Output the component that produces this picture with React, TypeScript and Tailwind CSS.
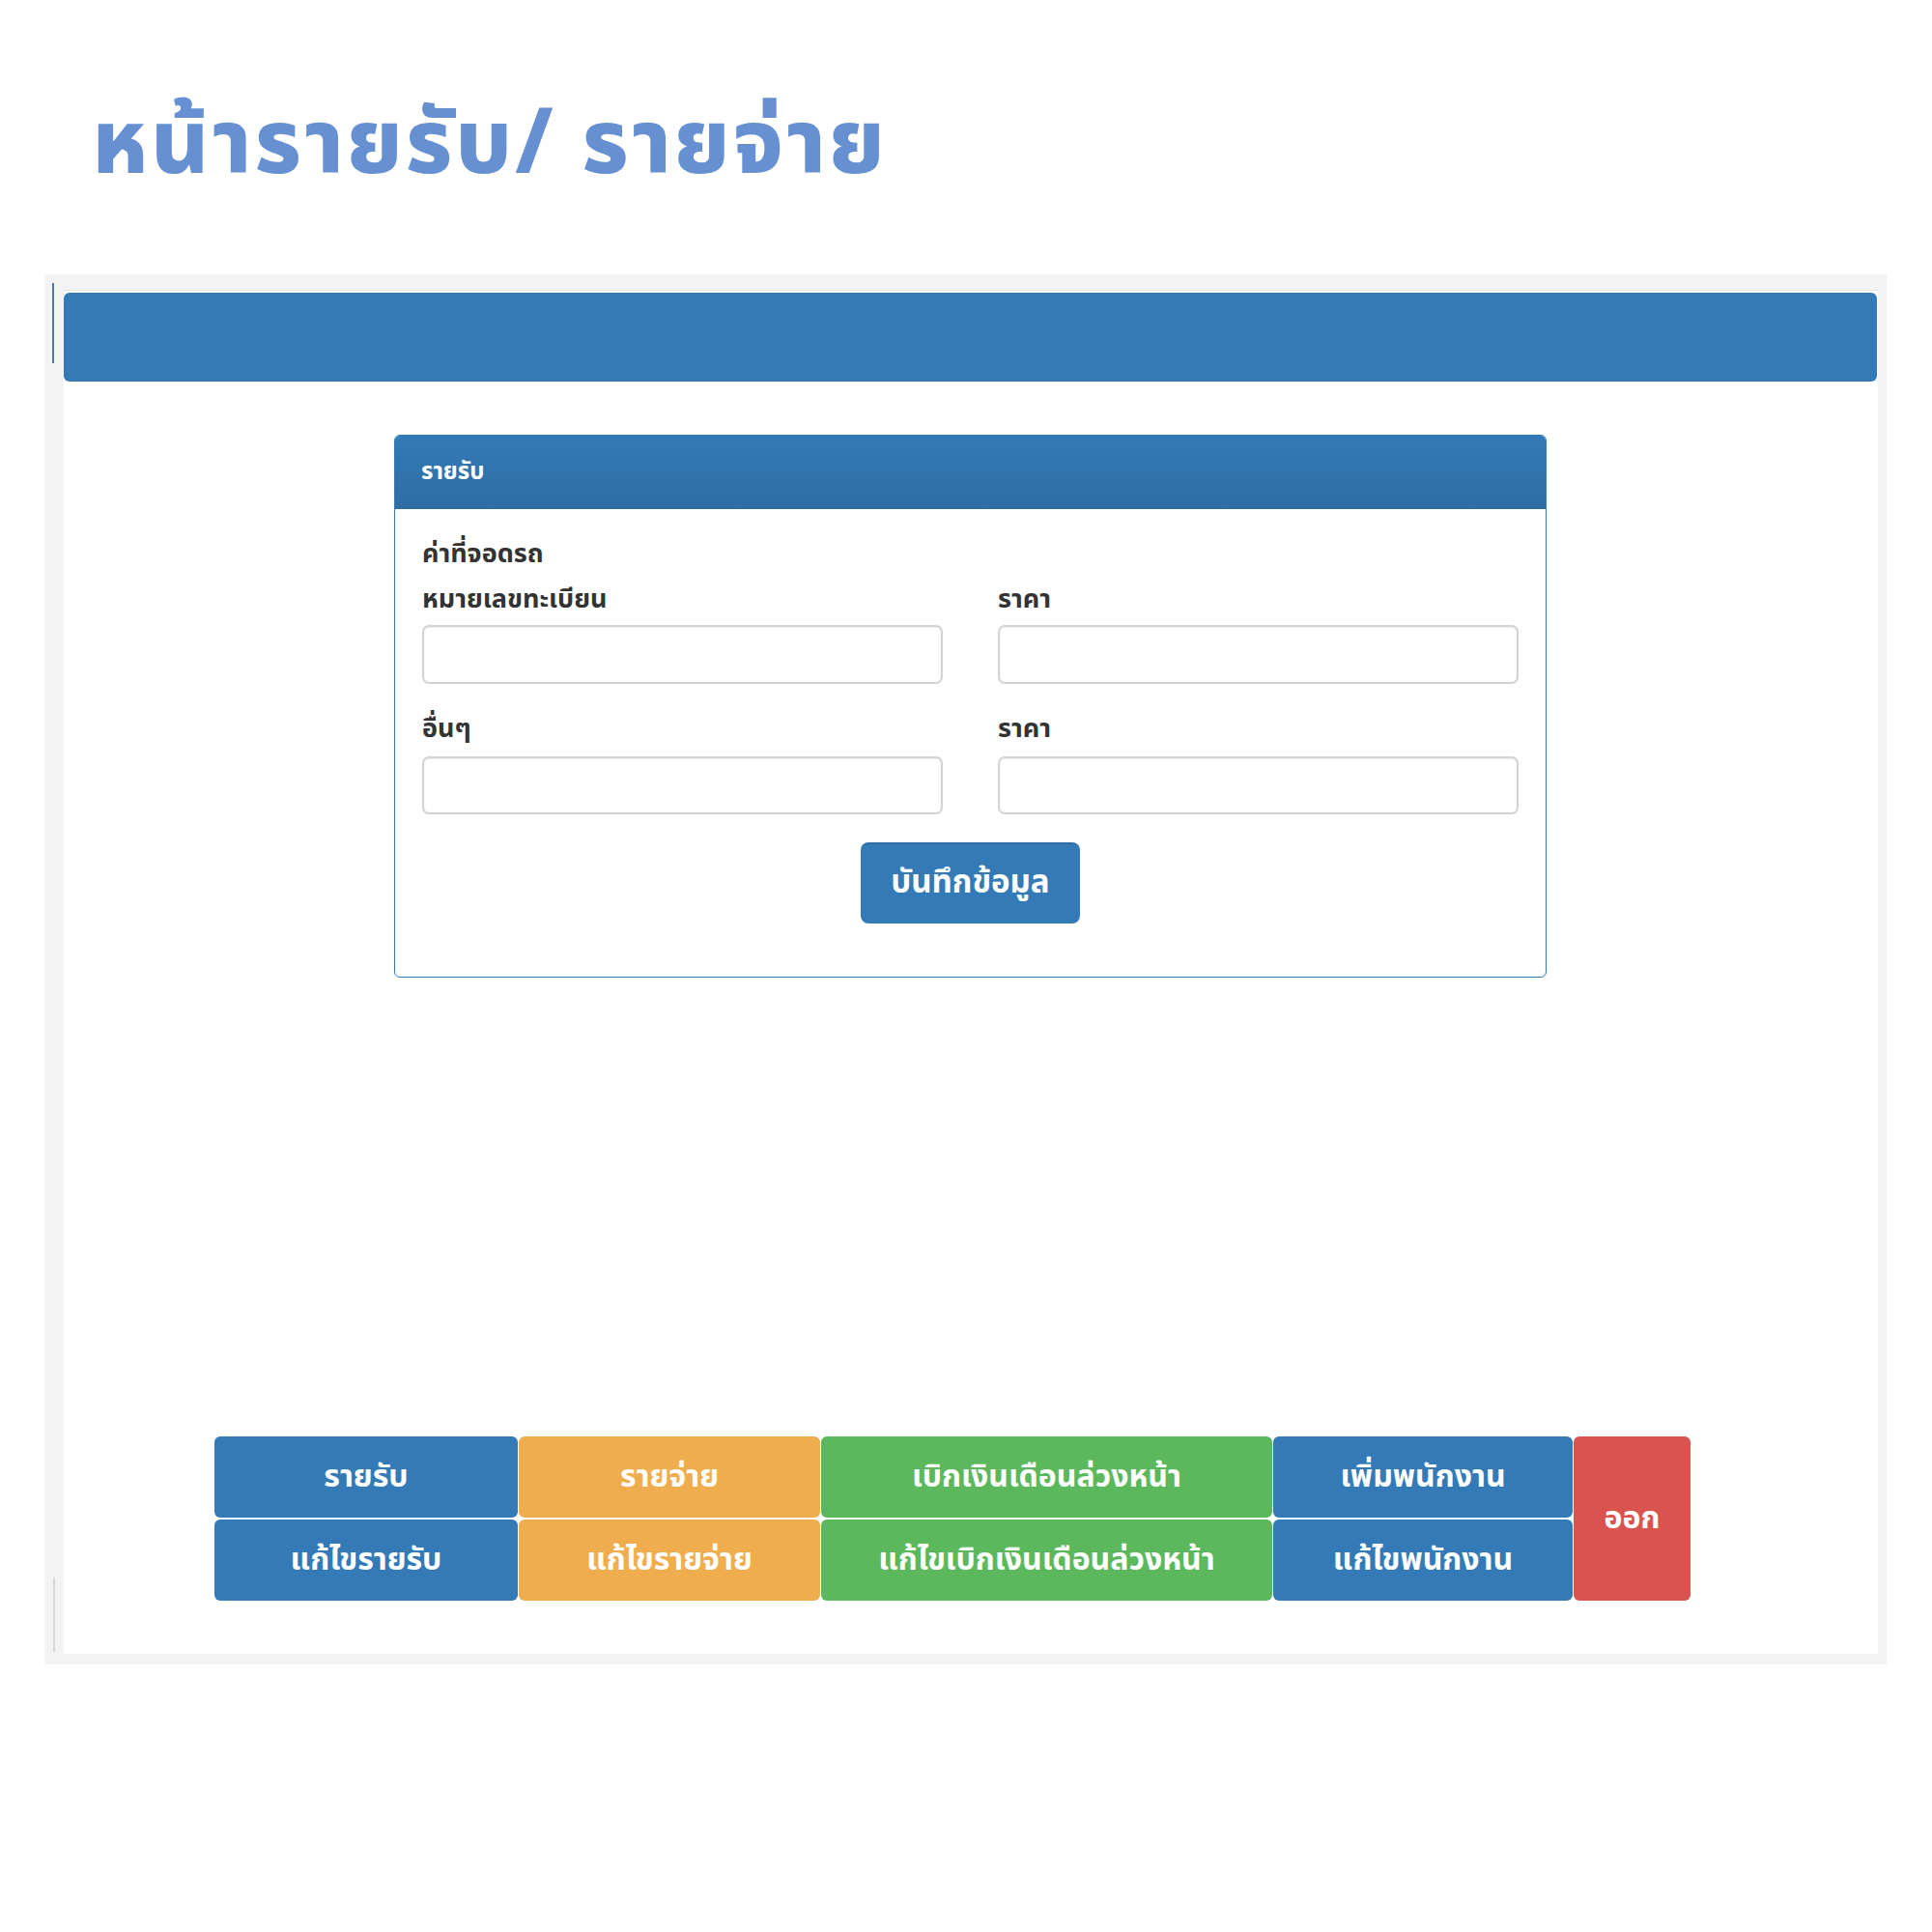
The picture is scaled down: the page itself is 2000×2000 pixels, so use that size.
import React from "react";

const F = "font-['Tahoma','Noto_Sans_Thai','Noto_Sans','DejaVu_Sans',sans-serif]";

function Btn({ label, cls }: { label: string; cls: string }) {
  return (
    <div className={`h-[84px] flex items-center justify-center rounded-[6px] text-white font-bold text-[32px] ${cls}`}>
      {label}
    </div>
  );
}

export default function App() {
  return (
    <div className={`w-[2000px] h-[2000px] bg-white relative ${F}`}>
      <div className="h-[284px] pl-[95px] pt-[96px]">
        <div className="text-[92px] font-extrabold tracking-[3px] leading-[110px] text-[#6690d2] font-['Noto_Sans_Thai','Tahoma',sans-serif]">
          หน้ารายรับ/ รายจ่าย
        </div>
      </div>

      <div className="ml-[46px] w-[1907px] h-[1439px] bg-[#f3f3f3] pt-[16px] pl-[20px] pr-[9px] relative">
        <div className="absolute left-[8px] top-[9px] w-[2px] h-[83px] bg-[#4a7aa8]" />
        <div className="absolute left-[9px] top-[1349px] w-[2px] h-[77px] bg-[#d6d6d6]" />
        <div className="bg-white h-[1412px] border-t border-[#e6e6e6] pt-[2px] flex flex-col">
          <div className="h-[92px] rounded-[6px] bg-[#337ab7] mr-[1px]" />

          <div className="mt-[55px] ml-[342px] w-[1193px] border border-[#337ab7] rounded-[6px] overflow-hidden">
            <div className="h-[76px] bg-gradient-to-b from-[#337ab7] to-[#2e6da4] flex items-center pl-[27px] text-white font-bold text-[24px]">
              รายรับ
            </div>
            <div className="px-[28px] pt-[27px] pb-[55px] text-[#333] font-bold text-[27px]">
              <div className="leading-[40px]">ค่าที่จอดรถ</div>
              <div className="grid grid-cols-2 gap-x-[57px]">
                <div>
                  <div className="mt-[7px] leading-[40px]">หมายเลขทะเบียน</div>
                  <div className="mt-[6px] h-[61px] border-2 border-[#d4d4d4] rounded-[7px] shadow-[inset_0_1px_2px_rgba(0,0,0,0.08)]" />
                </div>
                <div>
                  <div className="mt-[7px] leading-[40px]">ราคา</div>
                  <div className="mt-[6px] h-[61px] border-2 border-[#d4d4d4] rounded-[7px] shadow-[inset_0_1px_2px_rgba(0,0,0,0.08)]" />
                </div>
                <div>
                  <div className="mt-[27px] leading-[40px]">อื่นๆ</div>
                  <div className="mt-[8px] h-[60px] border-2 border-[#d4d4d4] rounded-[7px] shadow-[inset_0_1px_2px_rgba(0,0,0,0.08)]" />
                </div>
                <div>
                  <div className="mt-[27px] leading-[40px]">ราคา</div>
                  <div className="mt-[8px] h-[60px] border-2 border-[#d4d4d4] rounded-[7px] shadow-[inset_0_1px_2px_rgba(0,0,0,0.08)]" />
                </div>
              </div>
              <div className="flex justify-center mt-[29px]">
                <div className="w-[227px] h-[84px] rounded-[8px] bg-[#337ab7] border-t-2 border-[#2f6ea6] text-white text-[33px] flex items-center justify-center">
                  บันทึกข้อมูล
                </div>
              </div>
            </div>
          </div>

          <div className="mt-[475px] ml-[156px] flex gap-[1px]">
            <div className="w-[314px] flex flex-col gap-[2px]">
              <Btn label="รายรับ" cls="bg-[#337ab7]" />
              <Btn label="แก้ไขรายรับ" cls="bg-[#337ab7]" />
            </div>
            <div className="w-[312px] flex flex-col gap-[2px]">
              <Btn label="รายจ่าย" cls="bg-[#f0ad4e]" />
              <Btn label="แก้ไขรายจ่าย" cls="bg-[#f0ad4e]" />
            </div>
            <div className="w-[467px] flex flex-col gap-[2px]">
              <Btn label="เบิกเงินเดือนล่วงหน้า" cls="bg-[#5cb85c]" />
              <Btn label="แก้ไขเบิกเงินเดือนล่วงหน้า" cls="bg-[#5cb85c]" />
            </div>
            <div className="w-[310px] flex flex-col gap-[2px]">
              <Btn label="เพิ่มพนักงาน" cls="bg-[#337ab7]" />
              <Btn label="แก้ไขพนักงาน" cls="bg-[#337ab7]" />
            </div>
            <div className="w-[121px] h-[170px] rounded-[6px] bg-[#d9534f] flex items-center justify-center text-white font-bold text-[32px]">
              ออก
            </div>
          </div>
        </div>
      </div>
    </div>
  );
}
